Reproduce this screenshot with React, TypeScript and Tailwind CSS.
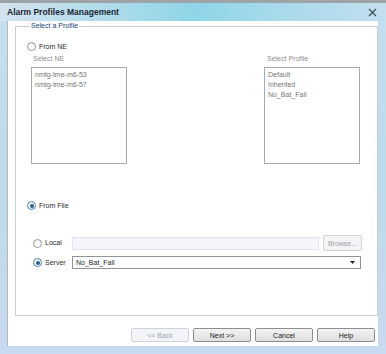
const font = { fontFamily: '"Liberation Sans", Arial, sans-serif' };

function Radio({ checked, label }: { checked?: boolean; label: string }) {
  return (
    <div className="flex items-center gap-[3px]">
      <span
        className={`flex h-[9px] w-[9px] items-center justify-center rounded-full border bg-gradient-to-b from-[#f4f4f4] to-white ${
          checked ? "border-[#4f7fae]" : "border-[#8f9aa3]"
        }`}
      >
        {checked && <span className="h-[4px] w-[4px] rounded-full bg-[#2a5d90]" />}
      </span>
      <span className="text-[7px] leading-[8px] text-[#2b2b2b]">{label}</span>
    </div>
  );
}

function ListBox({ items }: { items: string[] }) {
  return (
    <div className="h-[97px] w-[96px] border border-[#a5abb0] bg-white px-[3px] pt-[2px]">
      {items.map((it) => (
        <div key={it} className="h-[10px] text-[7px] leading-[10px] text-[#767676]">
          {it}
        </div>
      ))}
    </div>
  );
}

function Btn({ label, disabled }: { label: string; disabled?: boolean }) {
  return (
    <button
      className={`flex h-[14px] w-[58px] items-center justify-center rounded-[2px] border text-[7px] leading-none ${
        disabled
          ? "border-[#ccd3dc] bg-[#f3f4f8] text-[#a0a7b0]"
          : "border-[#8d8e8f] bg-gradient-to-b from-[#f4f4f4] to-[#dedede] text-[#1c1c1c]"
      }`}
    >
      {label}
    </button>
  );
}

export default function App() {
  return (
    <div
      style={font}
      className="flex h-[354px] w-[386px] flex-col overflow-hidden bg-gradient-to-b from-[#c7dfee] via-[#bcdaea] to-[#c9d9ef]"
    >
      {/* window behind */}
      <div className="h-[3px] bg-[#9ea3a8]" />

      {/* title bar */}
      <div className="flex h-[18px] items-center justify-between bg-gradient-to-r from-[#d3e3ee] via-[#8fd5e8] to-[#c3dff0] pl-[7px] pr-[9px]">
        <span className="text-[8.5px] font-bold leading-none text-[#1d2733]">Alarm Profiles Management</span>
        <svg width="9" height="9" viewBox="0 0 9 9" className="text-[#3d4b57]">
          <path d="M1 1 L8 8 M8 1 L1 8" stroke="currentColor" strokeWidth="1.2" />
        </svg>
      </div>

      {/* client area */}
      <div className="ml-[7px] mr-[8px] flex h-[325px] flex-col border-l border-[#b0b8be] bg-white pl-[7px] pt-[1px]">
        <fieldset className="h-[294px] w-[363px] border border-[#c9cfd4] pl-[11px]">
          <legend className="ml-[3px] px-[1px] text-[7px] leading-[8px] text-[#21457a]">Select a Profile</legend>

          <div className="mt-[12px]">
            <Radio label="From NE" />
          </div>

          <div className="mt-[4px] flex">
            <div className="ml-[4px] flex flex-col">
              <span className="ml-[2px] h-[8px] text-[7px] leading-[8px] text-[#8e8e8e]">Select NE</span>
              <div className="mt-[4px]">
                <ListBox items={["nmtg-tme-m6-53", "nmtg-tme-m6-57"]} />
              </div>
            </div>
            <div className="ml-[137px] flex flex-col">
              <span className="ml-[3px] h-[8px] text-[7px] leading-[8px] text-[#8e8e8e]">Select Profile</span>
              <div className="mt-[4px]">
                <ListBox items={["Default", "Inherited", "No_Bat_Fail"]} />
              </div>
            </div>
          </div>

          <div className="mt-[37px]">
            <Radio checked label="From File" />
          </div>

          <div className="mt-[25px] flex h-[16px] items-center pl-[6px]">
            <div className="w-[39px]">
              <Radio label="Local" />
            </div>
            <div className="h-[13px] w-[247px] border border-[#e1e3ee] bg-[#f5f5fb]" />
            <button className="ml-[4px] flex h-[16px] w-[39px] items-center justify-center rounded-[2px] border border-[#cfd4da] bg-[#f4f4f6] text-[7px] leading-none text-[#9aa1a8]">
              Browse...
            </button>
          </div>

          <div className="mt-[5px] flex h-[13px] items-center pl-[6px]">
            <div className="w-[39px]">
              <Radio checked label="Server" />
            </div>
            <div className="flex h-[13px] w-[289px] items-center justify-between border border-[#8e9498] bg-white pl-[3px] pr-[5px]">
              <span className="text-[7px] leading-none text-[#1f1f1f]">No_Bat_Fail</span>
              <svg width="5" height="3" viewBox="0 0 5 3">
                <path d="M0 0 H5 L2.5 3 Z" fill="#222" />
              </svg>
            </div>
          </div>
        </fieldset>

        <div className="mr-[3px] mt-[12px] flex justify-end gap-[4px]">
          <Btn label="<< Back" disabled />
          <Btn label="Next >>" />
          <Btn label="Cancel" />
          <Btn label="Help" />
        </div>
      </div>
    </div>
  );
}
